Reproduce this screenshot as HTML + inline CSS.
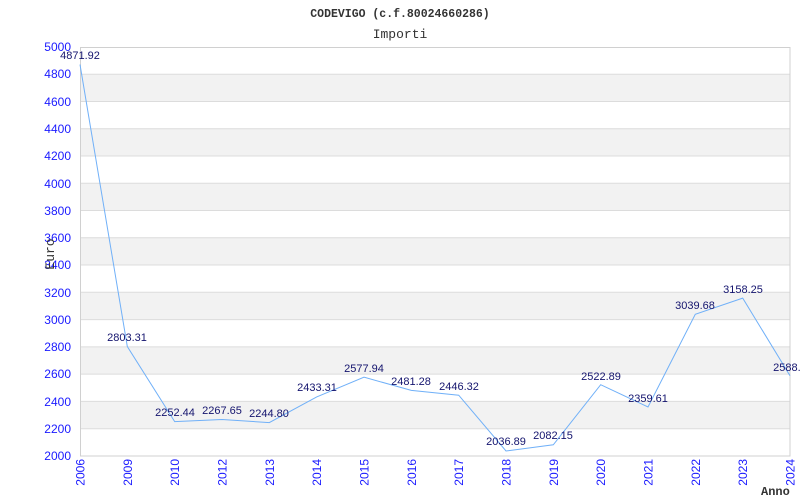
<!DOCTYPE html>
<html><head><meta charset="utf-8"><style>
html,body{margin:0;padding:0;background:#fff;width:800px;height:500px;overflow:hidden}
svg{display:block}
.t{font-family:"Liberation Mono",monospace;fill:#333}
.yl{font-family:"Liberation Sans",sans-serif;font-size:12px;fill:#1a1aff}
.xl{font-family:"Liberation Sans",sans-serif;font-size:12px;fill:#1a1aff}
.v{font-family:"Liberation Sans",sans-serif;font-size:11px;fill:#14146e}
</style></head><body>
<svg width="800" height="500" viewBox="0 0 800 500">
<text class="t" x="400" y="17" text-anchor="middle" font-size="11.5" font-weight="bold">CODEVIGO (c.f.80024660286)</text>
<text class="t" x="400" y="38" text-anchor="middle" font-size="13">Importi</text>
<!-- bands -->
<g fill="#f2f2f2">
<rect x="80" y="74.3" width="710" height="27.3"/>
<rect x="80" y="128.8" width="710" height="27.3"/>
<rect x="80" y="183.3" width="710" height="27.3"/>
<rect x="80" y="237.8" width="710" height="27.3"/>
<rect x="80" y="292.3" width="710" height="27.3"/>
<rect x="80" y="346.9" width="710" height="27.3"/>
<rect x="80" y="401.4" width="710" height="27.3"/>
</g>
<g stroke="#dcdcdc" stroke-width="1">
<line x1="80" x2="790" y1="74.3" y2="74.3"/><line x1="80" x2="790" y1="101.5" y2="101.5"/>
<line x1="80" x2="790" y1="128.8" y2="128.8"/><line x1="80" x2="790" y1="156" y2="156"/>
<line x1="80" x2="790" y1="183.3" y2="183.3"/><line x1="80" x2="790" y1="210.5" y2="210.5"/>
<line x1="80" x2="790" y1="237.8" y2="237.8"/><line x1="80" x2="790" y1="265" y2="265"/>
<line x1="80" x2="790" y1="292.3" y2="292.3"/><line x1="80" x2="790" y1="319.6" y2="319.6"/>
<line x1="80" x2="790" y1="346.9" y2="346.9"/><line x1="80" x2="790" y1="374.1" y2="374.1"/>
<line x1="80" x2="790" y1="401.4" y2="401.4"/><line x1="80" x2="790" y1="428.7" y2="428.7"/>
</g>
<rect x="80.5" y="47.5" width="709.5" height="408.5" fill="none" stroke="#d0d0d0"/>
<g class="yl" text-anchor="end">
<text x="71" y="51">5000</text><text x="71" y="78">4800</text><text x="71" y="106">4600</text>
<text x="71" y="133">4400</text><text x="71" y="160">4200</text><text x="71" y="188">4000</text>
<text x="71" y="215">3800</text><text x="71" y="242">3600</text><text x="71" y="269">3400</text>
<text x="71" y="297">3200</text><text x="71" y="324">3000</text><text x="71" y="351">2800</text>
<text x="71" y="378">2600</text><text x="71" y="406">2400</text><text x="71" y="433">2200</text>
<text x="71" y="460">2000</text>
</g>
<text class="t" font-size="13" transform="translate(54,254) rotate(-90)" text-anchor="middle">Euro</text>
<g class="xl" text-anchor="end">
<text transform="translate(84.5,459) rotate(-90)">2006</text>
<text transform="translate(131.8,459) rotate(-90)">2009</text>
<text transform="translate(179.2,459) rotate(-90)">2010</text>
<text transform="translate(226.5,459) rotate(-90)">2012</text>
<text transform="translate(273.8,459) rotate(-90)">2013</text>
<text transform="translate(321.2,459) rotate(-90)">2014</text>
<text transform="translate(368.5,459) rotate(-90)">2015</text>
<text transform="translate(415.8,459) rotate(-90)">2016</text>
<text transform="translate(463.2,459) rotate(-90)">2017</text>
<text transform="translate(510.5,459) rotate(-90)">2018</text>
<text transform="translate(557.8,459) rotate(-90)">2019</text>
<text transform="translate(605.2,459) rotate(-90)">2020</text>
<text transform="translate(652.5,459) rotate(-90)">2021</text>
<text transform="translate(699.8,459) rotate(-90)">2022</text>
<text transform="translate(747.2,459) rotate(-90)">2023</text>
<text transform="translate(794.5,459) rotate(-90)">2024</text>
</g>
<text class="t" x="761" y="495" font-size="12" font-weight="bold" fill="#444">Anno</text>
<polyline fill="none" stroke="#70b0f8" stroke-width="1" points="80,64.5 127.3,346.5 174.7,421.6 222,419.5 269.3,422.6 316.7,396.9 364,377.2 411.3,390.4 458.7,395.2 506,451 553.3,444.8 600.7,384.7 648,407 695.3,314.3 742.7,298.1 790,375.7"/>
<g class="v" text-anchor="middle">
<text x="80" y="59">4871.92</text>
<text x="127" y="341">2803.31</text>
<text x="175" y="416">2252.44</text>
<text x="222" y="414">2267.65</text>
<text x="269" y="417">2244.80</text>
<text x="317" y="391">2433.31</text>
<text x="364" y="372">2577.94</text>
<text x="411" y="385">2481.28</text>
<text x="459" y="390">2446.32</text>
<text x="506" y="445">2036.89</text>
<text x="553" y="439">2082.15</text>
<text x="601" y="380">2522.89</text>
<text x="648" y="402">2359.61</text>
<text x="695" y="309">3039.68</text>
<text x="743" y="293">3158.25</text>
<text x="790" y="371">2588.5</text>
</g>
</svg>
</body></html>
